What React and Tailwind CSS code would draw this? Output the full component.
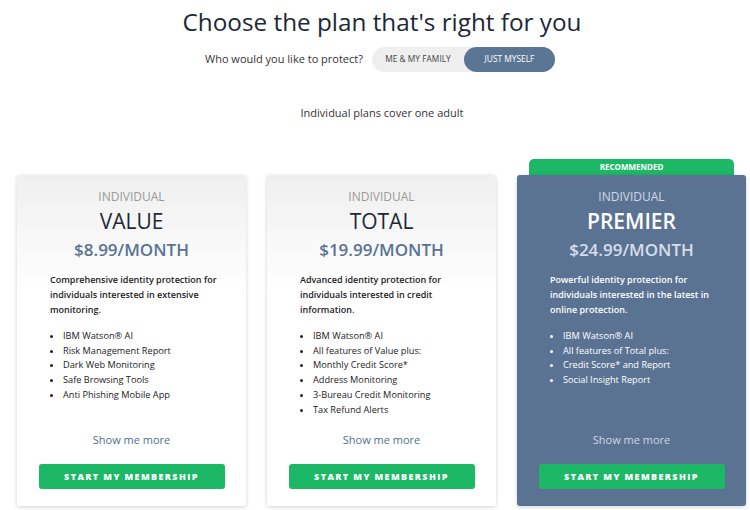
import React from 'react';

const PLANS = [
  {
    name: 'VALUE',
    price: '$8.99/MONTH',
    desc: 'Comprehensive identity protection for individuals interested in extensive monitoring.',
    features: ['IBM Watson® AI', 'Risk Management Report', 'Dark Web Monitoring', 'Safe Browsing Tools', 'Anti Phishing Mobile App'],
  },
  {
    name: 'TOTAL',
    price: '$19.99/MONTH',
    desc: 'Advanced identity protection for individuals interested in credit information.',
    features: ['IBM Watson® AI', 'All features of Value plus:', 'Monthly Credit Score*', 'Address Monitoring', '3-Bureau Credit Monitoring', 'Tax Refund Alerts'],
  },
  {
    name: 'PREMIER',
    price: '$24.99/MONTH',
    desc: 'Powerful identity protection for individuals interested in the latest in online protection.',
    features: ['IBM Watson® AI', 'All features of Total plus:', 'Credit Score* and Report', 'Social Insight Report'],
    featured: true,
  },
];

function PlanCard({ plan }) {
  const dark = plan.featured;
  return (
    <div
      className={
        'w-[229px] h-[331px] flex flex-col rounded-[3px] shadow-[0_1px_4px_rgba(0,0,0,0.18)] ' +
        (dark ? 'bg-[#5b7393] text-white' : 'bg-linear-to-b from-[#efefef] to-white to-35% text-[#222]')
      }
    >
      <div className="pt-[14px] text-center">
        <div className={'text-[12px] leading-[16px] ' + (dark ? 'text-[#d0d9e4]' : 'text-[#999]')}>INDIVIDUAL</div>
        <div className={'text-[21px] leading-[30px] mt-[1px] ' + (dark ? 'text-white font-semibold' : 'text-[#1e2838]')}>{plan.name}</div>
        <div className={'text-[17px] leading-[28px] font-semibold ' + (dark ? 'text-[#d6dee9]' : 'text-[#5a7395]')}>{plan.price}</div>
      </div>
      <p className="mt-[8px] pl-[33px] pr-[24px] text-[9px] leading-[15px] font-semibold">{plan.desc}</p>
      <ul className="mt-[12px] ml-[33px] pl-[13px] list-disc text-[9.2px] leading-[14.7px]">
        {plan.features.map((f) => (
          <li key={f}>{f}</li>
        ))}
      </ul>
      <div className="mt-auto pb-[17px] flex flex-col items-center">
        <a className={'text-[11px] leading-[16px] ' + (dark ? 'text-[#cdd6e2]' : 'text-[#4d7093]')}>Show me more</a>
        <button className="mt-[16px] w-[186px] h-[25px] rounded-[3px] bg-[#1db866] text-white text-[9px] font-extrabold tracking-[1.4px]">
          START MY MEMBERSHIP
        </button>
      </div>
    </div>
  );
}

export default function App() {
  return (
    <div className="w-[750px] h-[510px] bg-white overflow-hidden font-['Open_Sans',sans-serif]">
      <div className="pl-[14px]">
        <h1 className="pt-[7px] text-center text-[24.3px] leading-[30px] text-[#1c2837]">
          Choose the plan that's right for you
        </h1>

        <div className="mt-[10px] flex justify-center items-center gap-[9px] pr-[4px]">
          <span className="text-[11px] text-[#333]">Who would you like to protect?</span>
          <div className="flex h-[25px] rounded-full bg-[#efefef]">
            <button className="w-[92px] text-[8.4px] text-[#444]">ME &amp; MY FAMILY</button>
            <button className="w-[91px] rounded-full bg-[#5b7595] text-[8.4px] text-white">JUST MYSELF</button>
          </div>
        </div>

        <p className="mt-[33px] text-center text-[11px] leading-[16px] text-[#333]">Individual plans cover one adult</p>
      </div>

      <div className="mt-[38px] flex items-end gap-[21px] pl-[17px]">
        <PlanCard plan={PLANS[0]} />
        <PlanCard plan={PLANS[1]} />
        <div className="flex flex-col items-center">
          <div className="w-[205px] h-[16px] rounded-t-[5px] bg-[#1db866] text-white text-[8px] font-bold leading-[16px] text-center">
            RECOMMENDED
          </div>
          <PlanCard plan={PLANS[2]} />
        </div>
      </div>
    </div>
  );
}
